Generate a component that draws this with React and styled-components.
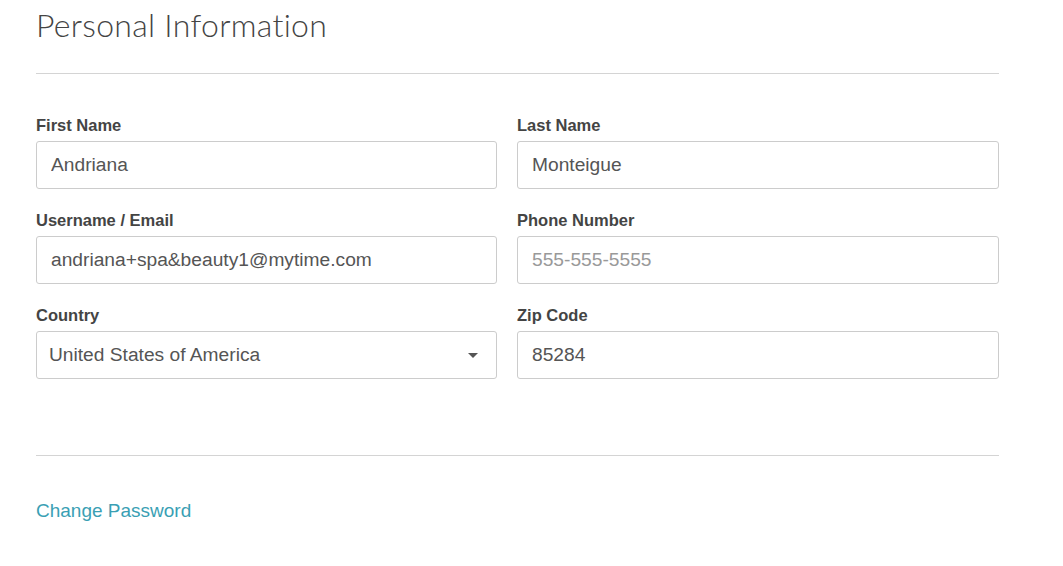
import styled, { createGlobalStyle } from "styled-components";

const GlobalStyle = createGlobalStyle`
  body {
    margin: 0;
    background: #fff;
    font-family: "Liberation Sans", Arial, sans-serif;
  }
`;

const fields = [
  [
    { label: "First Name", value: "Andriana" },
    { label: "Last Name", value: "Monteigue" },
  ],
  [
    { label: "Username / Email", value: "andriana+spa&beauty1@mytime.com" },
    { label: "Phone Number", placeholder: "555-555-5555" },
  ],
  [
    { label: "Country", value: "United States of America", select: true },
    { label: "Zip Code", value: "85284" },
  ],
];

const App = () => {
  return (
    <>
      <GlobalStyle />
      <Page>
        <Title>Personal Information</Title>
        <Divider />
        <FormGrid>
          {fields.flat().map((f) => (
            <Field key={f.label}>
              <Label>{f.label}</Label>
              {f.select ? (
                <SelectBox>
                  <span>{f.value}</span>
                  <Caret />
                </SelectBox>
              ) : (
                <Input
                  defaultValue={f.value}
                  placeholder={f.placeholder}
                  readOnly
                />
              )}
            </Field>
          ))}
        </FormGrid>
        <Divider $bottom />
        <ChangeLink href="#">Change Password</ChangeLink>
      </Page>
    </>
  );
};

export default App;

const Page = styled.div`
  width: 963px;
  padding: 0 0 0 36px;
  color: #444;
`;

const Title = styled.h1`
  margin: 0;
  padding-top: 5px;
  height: 40px;
  font-family: "Lato", sans-serif;
  font-weight: 300;
  font-size: 32px;
  line-height: 40px;
  color: #444;
  letter-spacing: 0.3px;
`;

const Divider = styled.hr`
  border: 0;
  border-top: 1px solid #d4d4d4;
  margin: ${(p) => (p.$bottom ? "76px 0 0" : "28px 0 0")};
`;

const FormGrid = styled.div`
  display: grid;
  grid-template-columns: 461px 482px;
  column-gap: 20px;
  row-gap: 22px;
  margin-top: 42px;
`;

const Field = styled.div`
  display: flex;
  flex-direction: column;
`;

const Label = styled.label`
  font-size: 16.5px;
  font-weight: bold;
  line-height: 18px;
  height: 18px;
  margin-bottom: 7px;
  color: #444;
`;

const Input = styled.input`
  box-sizing: border-box;
  height: 48px;
  width: 100%;
  border: 1px solid #ccc;
  border-radius: 3px;
  padding: 0 14px;
  font-family: "Liberation Sans", Arial, sans-serif;
  font-size: 19.2px;
  color: #555;
  outline: none;
  &::placeholder {
    color: #999;
  }
`;

const SelectBox = styled.div`
  box-sizing: border-box;
  height: 48px;
  border: 1px solid #ccc;
  border-radius: 3px;
  padding: 0 18px 0 12px;
  display: flex;
  align-items: center;
  justify-content: space-between;
  font-size: 19.2px;
  color: #555;
`;

const Caret = styled.span`
  width: 0;
  height: 0;
  border-left: 5px solid transparent;
  border-right: 5px solid transparent;
  border-top: 5px solid #555;
`;

const ChangeLink = styled.a`
  display: inline-block;
  margin-top: 44px;
  font-size: 19px;
  color: #3a9fb4;
  text-decoration: none;
`;
